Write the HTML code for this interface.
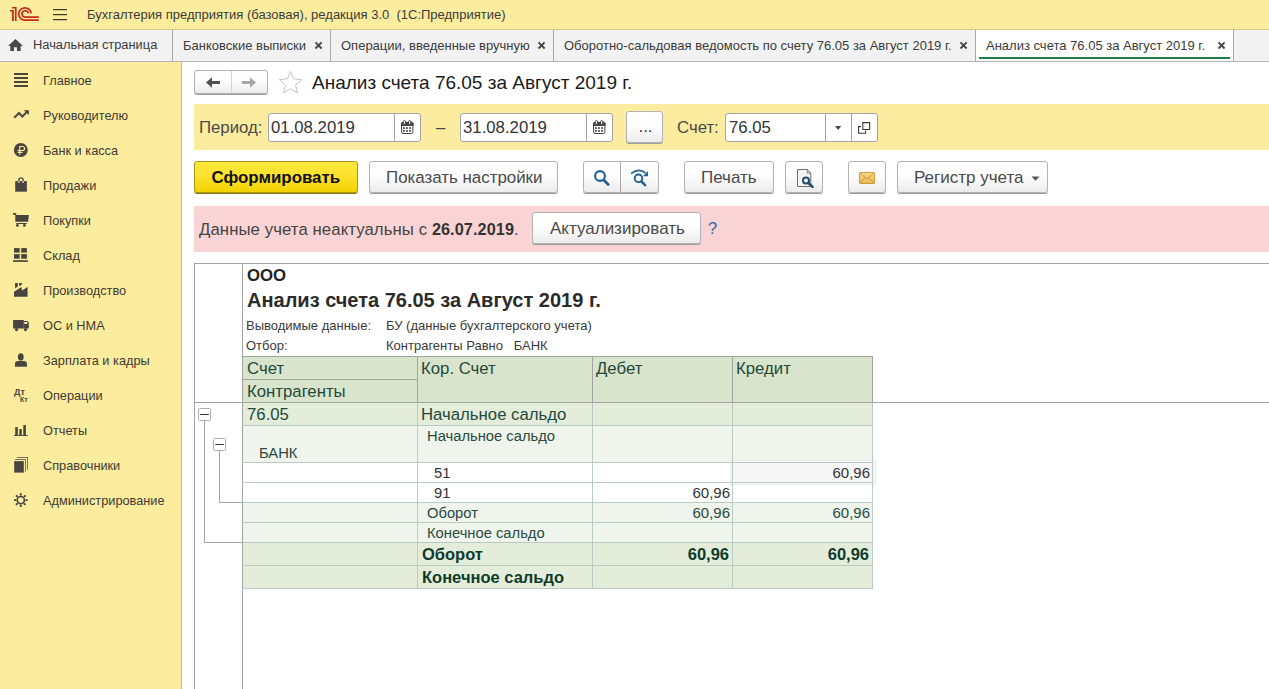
<!DOCTYPE html>
<html><head><meta charset="utf-8">
<style>
*{margin:0;padding:0;box-sizing:border-box}
html,body{width:1269px;height:689px;overflow:hidden;background:#fff;font-family:"Liberation Sans",sans-serif;color:#333}
.a{position:absolute}
.t{position:absolute;white-space:nowrap;line-height:1}
#top{left:0;top:0;width:1269px;height:30px;background:#fbec9e;border-bottom:1px solid #d9cb86}
#tabs{left:0;top:30px;width:1269px;height:32px;background:#f2f2f2;border-bottom:1px solid #b5b5b5}
.sep{position:absolute;top:30px;width:1px;height:31px;background:#a8a8a8}
.tb{font-size:13px;color:#3b3b3b;top:39px}
#side{left:0;top:62px;width:182px;height:627px;background:#fbec9e;border-right:1px solid #c9bb80}
.si{left:43px;font-size:12.75px;color:#3f3b33}
.btn{background:linear-gradient(#fff 0%,#fdfdfd 45%,#ececec 100%);border:1px solid #b2b2b2;border-radius:3px;box-shadow:0 1px 0 #9c9c9c}
.ybtn{background:linear-gradient(#ffe93c 0%,#fde12a 50%,#f3d200 100%);border:1px solid #a89417;border-radius:3px;box-shadow:0 1px 0 #8d7b10}
.inp{background:#fff;border:1px solid #a3a3a3;border-radius:3px}
.lbl{font-size:16.75px;color:#4a4a4a}
.val{font-size:16.75px;color:#333}
.bt{font-size:17px;color:#4a4a4a}
.rs{font-size:13px;color:#3a3a3a}
.rh{font-size:16.75px;color:#1f4a3c}
.rm{font-size:14.75px;color:#2a4a40}
.rn{font-size:14.75px;color:#333}
.rb{font-size:16.5px;font-weight:bold;color:#0f3b2d}
.hl{position:absolute;left:242px;width:631px;height:1px;background:#b9ccc4}
.vl{position:absolute;top:402px;width:1px;height:187px;background:#b9ccc4}
.rn2{font-size:15px;color:#333}
.rm2{font-size:15px;color:#2a4a40}
</style></head><body>
<!-- top bar -->
<div id="top" class="a"></div>
<svg class="a" style="left:0;top:0" width="80" height="29" viewBox="0 0 80 29">
 <g fill="#c82a1a">
  <path d="M10 10h3.8v10.9h-1.8v-9.4h-2z"/>
  <path d="M12 7h4.6v13.9h-1.7v-12.4h-2.9z"/>
 </g>
 <g fill="none" stroke="#c82a1a" stroke-width="1.7">
  <path d="M31.1 13.4A6.2 6.2 0 1 0 25.2 20.2H38.9"/>
  <path d="M28.3 13.4A3.15 3.15 0 1 0 25.2 17.05H38.9"/>
 </g>
 <g fill="#3d3828">
  <rect x="53" y="9" width="14" height="1.2"/>
  <rect x="53" y="14" width="14" height="1.2"/>
  <rect x="53" y="19" width="14" height="1.2"/>
 </g>
</svg>
<div class="t" style="left:87px;top:8px;font-size:13px;color:#3c3c3c">Бухгалтерия предприятия (базовая), редакция 3.0&nbsp; (1С:Предприятие)</div>

<!-- tabs -->
<div id="tabs" class="a"></div>
<div class="a" style="left:976px;top:30px;width:257px;height:31px;background:#fff"></div>
<div class="a" style="left:979px;top:57px;width:251px;height:2px;background:#1f7d47"></div>
<div class="sep" style="left:172px"></div>
<div class="sep" style="left:330px"></div>
<div class="sep" style="left:553px"></div>
<div class="sep" style="left:975px"></div>
<div class="sep" style="left:1233px"></div>
<svg class="a" style="left:0;top:30px" width="1269" height="31" viewBox="0 30 1269 31">
 <path fill="#4a4a4a" d="M15.5 39L8 46H10.3V51H14V47.3H17V51H20.7V46H23z"/>
 <g stroke="#454545" stroke-width="1.9" fill="none">
  <path d="M315.5 42.4l6.1 6.1M321.6 42.4l-6.1 6.1"/>
  <path d="M538.5 42.4l6.1 6.1M544.6 42.4l-6.1 6.1"/>
  <path d="M960.5 42.4l6.1 6.1M966.6 42.4l-6.1 6.1"/>
  <path d="M1218.5 42.4l6.1 6.1M1224.6 42.4l-6.1 6.1"/>
 </g>
</svg>
<div class="t tb" style="left:33px;font-size:12.85px">Начальная страница</div>
<div class="t tb" style="left:183px">Банковские выписки</div>
<div class="t tb" style="left:341px">Операции, введенные вручную</div>
<div class="t tb" style="left:564px">Оборотно-сальдовая ведомость по счету 76.05 за Август 2019 г.</div>
<div class="t tb" style="left:986px">Анализ счета 76.05 за Август 2019 г.</div>

<!-- sidebar -->
<div id="side" class="a"></div>
<svg class="a" style="left:0;top:62px" width="40" height="460" viewBox="0 62 40 460">
 <g fill="#484540">
  <!-- main -->
  <rect x="14" y="73" width="14" height="2"/><rect x="14" y="77" width="14" height="2"/>
  <rect x="14" y="81" width="14" height="2"/><rect x="14" y="85" width="14" height="2"/>
  <!-- chart arrow -->
  <path d="M23.8 110.2H28.9V115.1z"/>
  <!-- ruble -->
  <circle cx="20.8" cy="150" r="6.9"/>
  <!-- bag -->
  <path d="M15.2 181.1H26.9V191.7H15.2z"/>
  <!-- cart -->
  <path d="M13 213.1H16.2V215H28.9L28.1 221.7H15.3V214.7H13z"/>
  <rect x="16.3" y="223" width="10.5" height="1"/>
  <circle cx="17.4" cy="225.4" r="1.4"/><circle cx="24.4" cy="225.4" r="1.4"/>
  <!-- warehouse -->
  <rect x="14" y="248.1" width="5.7" height="4.5"/><rect x="21.2" y="248.1" width="5.7" height="4.5"/>
  <rect x="14" y="254.1" width="5.7" height="4.6"/><rect x="21.2" y="254.1" width="5.7" height="4.6"/>
  <rect x="13.1" y="260.2" width="14.7" height="1.7"/>
  <!-- factory -->
  <path d="M14 296.7V291.8L21.4 287.1L22 290.5L27.6 287.1V296.7z"/>
  <path d="M15 282.9H17.8V286.5L15.2 288.6z"/>
  <path d="M19.1 282.9H21.8V284.7L19.1 286.3z"/>
  <!-- truck -->
  <path d="M13.1 320H23.8V328.5H13.1z"/>
  <path d="M23.8 320.9H27.4L28.8 322.8V328.5H23.8z"/>
  <circle cx="16.5" cy="329.6" r="1.6"/><circle cx="25.5" cy="329.6" r="1.6"/>
  <!-- person -->
  <ellipse cx="20.8" cy="356.9" rx="2.9" ry="3.7"/>
  <path d="M15 366.7V363.5Q15 361 18 361H23.6Q26.9 361 26.9 363.5V366.7z"/>
  <!-- reports -->
  <rect x="15.2" y="427.1" width="2.6" height="8.2"/>
  <rect x="19.3" y="429.1" width="2.5" height="6.2"/>
  <rect x="23.3" y="425" width="2.6" height="10.3"/>
  <rect x="14" y="435" width="13.8" height="0.9"/>
  <!-- books -->
  <rect x="14.2" y="461.1" width="9.6" height="11.5"/>
  <path d="M15.2 459H25.7V471.7H25V459.8H15.2z"/>
  <path d="M17.1 457H27.8V469.8H27.1V457.7H17.1z"/>
 </g>
 <g fill="none" stroke="#484540">
  <path stroke-width="2" d="M14.2 117.8L19.1 113L22.3 116.6L26.5 112.2"/>
  <path stroke-width="1.4" d="M18.9 181.5V180Q18.9 177.9 21 177.9Q23.1 177.9 23.1 180V181.5"/>
  <circle cx="20.8" cy="500.1" r="3.6" stroke-width="1.6"/>
  <path stroke-width="1.8" d="M20.8 493.3V495.5M20.8 504.7V506.9M14 500.1H16.2M25.4 500.1H27.6M16 495.3L17.5 496.8M24.1 503.4L25.6 504.9M25.6 495.3L24.1 496.8M17.5 503.4L16 504.9"/>
 </g>
 <g fill="none" stroke="#fbec9e" stroke-width="1.1">
  <path d="M19.7 154.8V146.5H22.6Q24.6 146.5 24.6 148.5Q24.6 150.5 22.6 150.5H17.6M17.6 152.4H22.5"/>
 </g>
 <rect x="24.2" y="322" width="3" height="2" fill="#f5eab8"/>
 <ellipse cx="18.9" cy="182.1" rx="0.75" ry="1" fill="#f7ecc0"/><ellipse cx="23.1" cy="182.1" rx="0.75" ry="1" fill="#f7ecc0"/>
 <text x="14" y="394.6" font-family="Liberation Sans" font-weight="bold" font-size="9" fill="#484540">Дт</text>
 <text x="20" y="401.7" font-family="Liberation Sans" font-weight="bold" font-size="7" fill="#484540">Кт</text>
</svg>
<div class="t si" style="top:74.5px">Главное</div>
<div class="t si" style="top:109.5px">Руководителю</div>
<div class="t si" style="top:144.5px">Банк и касса</div>
<div class="t si" style="top:179.5px">Продажи</div>
<div class="t si" style="top:214.5px">Покупки</div>
<div class="t si" style="top:249.5px">Склад</div>
<div class="t si" style="top:284.5px">Производство</div>
<div class="t si" style="top:319.5px">ОС и НМА</div>
<div class="t si" style="top:354.5px">Зарплата и кадры</div>
<div class="t si" style="top:389.5px">Операции</div>
<div class="t si" style="top:424.5px">Отчеты</div>
<div class="t si" style="top:459.5px">Справочники</div>
<div class="t si" style="top:494.5px">Администрирование</div>


<!-- form header -->
<div class="btn a" style="left:194px;top:70px;width:74px;height:24px"></div>
<div class="a" style="left:231px;top:71px;width:1px;height:22px;background:#d4d4d4"></div>
<svg class="a" style="left:194px;top:70px" width="120" height="26" viewBox="194 70 120 26">
 <path fill="#505050" d="M206 82.5L212 77.2V81H220V84H212V87.8z"/>
 <path fill="#a6a6a6" d="M256 82.5L250 77.2V81H242V84H250V87.8z"/>
 <path fill="none" stroke="#c4c4c4" stroke-width="1" d="M290.5 71.4L293.7 78.9L301.8 79.6L295.6 85.0L297.5 92.9L290.5 88.7L283.5 92.9L285.4 85.0L279.2 79.6L287.3 78.9z"/>
</svg>
<div class="t" style="left:312px;top:72.7px;font-size:19px;color:#1a1a1a">Анализ счета 76.05 за Август 2019 г.</div>

<!-- period panel -->
<div class="a" style="left:194px;top:104px;width:1075px;height:46px;background:#fbeca0"></div>
<div class="t lbl" style="left:199px;top:119.8px">Период:</div>
<div class="inp a" style="left:268px;top:113px;width:153px;height:29px"></div>
<div class="a" style="left:394px;top:114px;width:1px;height:27px;background:#a3a3a3"></div>
<div class="t val" style="left:271px;top:119.6px">01.08.2019</div>
<div class="t lbl" style="left:436px;top:119.8px">–</div>
<div class="inp a" style="left:460px;top:113px;width:153px;height:29px"></div>
<div class="a" style="left:586px;top:114px;width:1px;height:27px;background:#a3a3a3"></div>
<div class="t val" style="left:463px;top:119.6px">31.08.2019</div>
<div class="btn a" style="left:626px;top:111px;width:37px;height:32px"></div>
<div class="t" style="left:638.5px;top:119px;font-size:16.75px;color:#333">...</div>
<div class="t lbl" style="left:677px;top:119.8px">Счет:</div>
<div class="inp a" style="left:725px;top:113px;width:153px;height:29px"></div>
<div class="a" style="left:825px;top:114px;width:1px;height:27px;background:#a3a3a3"></div>
<div class="a" style="left:851px;top:114px;width:1px;height:27px;background:#a3a3a3"></div>
<div class="t val" style="left:729px;top:119.6px">76.05</div>
<svg class="a" style="left:390px;top:110px" width="500" height="36" viewBox="390 110 500 36">
 <g id="cal">
  <rect x="401.6" y="122.4" width="11.3" height="11.1" rx="1.4" fill="#fff" stroke="#454545" stroke-width="1"/>
  <path d="M401.1 123.6Q401.1 121.9 402.8 121.9H411.8Q413.5 121.9 413.5 123.6V125.9H401.1z" fill="#454545"/>
  <rect x="403.3" y="120.6" width="2.3" height="3.8" rx="1.15" fill="#fff" stroke="#454545" stroke-width="1"/>
  <rect x="408.5" y="120.6" width="2.3" height="3.8" rx="1.15" fill="#fff" stroke="#454545" stroke-width="1"/>
  <g fill="#3a3a3a">
   <rect x="403" y="127.2" width="1.7" height="1.7"/><rect x="406" y="127.2" width="1.7" height="1.7"/><rect x="409.2" y="127.2" width="1.7" height="1.7"/>
   <rect x="403" y="130.1" width="1.7" height="1.7"/><rect x="406" y="130.1" width="1.7" height="1.7"/><rect x="409.2" y="130.1" width="1.7" height="1.7"/>
  </g>
 </g>
 <use href="#cal" x="192" y="0"/>
 <path fill="#444" d="M835 126H841.2L838.1 130z"/>
 <path fill="none" stroke="#3a3a3a" stroke-width="1.1" d="M862.8 129.5V122.6H869.6V129.5z M861 126.6H858.6V133.2H865.6V130.6"/>
</svg>

<!-- command bar -->
<div class="ybtn a" style="left:194px;top:161px;width:164px;height:32px"></div>
<div class="t" style="left:211.5px;top:170px;font-size:16.9px;font-weight:bold;color:#111">Сформировать</div>
<div class="btn a" style="left:369px;top:161px;width:189px;height:32px"></div>
<div class="t bt" style="left:386px;top:169.6px;font-size:16.9px">Показать настройки</div>
<div class="btn a" style="left:583px;top:161px;width:76px;height:32px"></div>
<div class="a" style="left:620px;top:162px;width:1px;height:31px;background:#a8a8a8"></div>
<div class="btn a" style="left:684px;top:161px;width:90px;height:32px"></div>
<div class="t bt" style="left:701px;top:168.7px">Печать</div>
<div class="btn a" style="left:785px;top:161px;width:38px;height:32px"></div>
<div class="btn a" style="left:848px;top:161px;width:38px;height:32px"></div>
<div class="btn a" style="left:897px;top:161px;width:151px;height:32px"></div>
<div class="t bt" style="left:914px;top:168.7px">Регистр учета</div>
<svg class="a" style="left:580px;top:160px" width="480" height="36" viewBox="580 160 480 36">
 <g fill="none" stroke="#21609a">
  <circle cx="600" cy="176" r="4.9" stroke-width="2.1"/>
  <path d="M603.8 180l4.4 4.4" stroke-width="2.8" stroke-linecap="round"/>
  <circle cx="638.5" cy="178.3" r="3.8" stroke-width="1.9"/>
  <path d="M641.4 181.3l3.7 3.8" stroke-width="2.5" stroke-linecap="round"/>
  <path d="M631 173.6Q639 167.5 645.5 173" stroke-width="1.7"/>
 </g>
 <path fill="#21609a" d="M648 171V176.2H643z"/>
 <path fill="#f4f4f4" stroke="#6e6e6e" stroke-width="1" d="M797.5 169.5H807.3L810.8 173V186.5H797.5z"/>
 <path fill="none" stroke="#6e6e6e" stroke-width="0.9" d="M807.3 169.5V173H810.8"/>
 <g fill="none" stroke="#1f4f78">
  <circle cx="806" cy="180.4" r="3" stroke-width="2"/>
  <path d="M808.4 183l4.2 3.9" stroke-width="2.5" stroke-linecap="round"/>
 </g>
 <defs><linearGradient id="env" x1="0" y1="0" x2="0" y2="1"><stop offset="0" stop-color="#f7d98a"/><stop offset="1" stop-color="#e9b752"/></linearGradient></defs>
 <rect x="859.5" y="172.5" width="15" height="11" rx="0.8" fill="url(#env)" stroke="#c99a3e" stroke-width="1"/>
 <path fill="none" stroke="#c39540" stroke-width="0.9" d="M860 173.2L867 178.8L874 173.2M860 183L865 178M874 183L869 178"/>
 <path fill="#555" d="M1031.5 176.5H1039.5L1035.5 180.8z"/>
</svg>

<!-- pink message -->
<div class="a" style="left:194px;top:206px;width:1075px;height:46px;background:#fad4d4"></div>
<div class="t" style="left:199px;top:220.5px;font-size:16.75px;color:#454545;letter-spacing:0.08px">Данные учета неактуальны с <b style="color:#333;font-size:16.25px">26.07.2019</b>.</div>
<div class="btn a" style="left:532px;top:212px;width:169px;height:32px"></div>
<div class="t bt" style="left:550px;top:219.9px">Актуализировать</div>
<div class="t" style="left:708px;top:220px;font-size:16.5px;color:#2d6ba3">?</div>


<!-- report -->
<div class="a" style="left:194px;top:263px;width:1075px;height:1px;background:#a3a3a3"></div>
<div class="a" style="left:194px;top:263px;width:1px;height:426px;background:#a3a3a3"></div>
<div class="a" style="left:242px;top:263px;width:1px;height:426px;background:#a3a3a3"></div>
<div class="a" style="left:194px;top:402px;width:48px;height:1px;background:#a3a3a3"></div>
<div class="a" style="left:873px;top:402px;width:396px;height:1px;background:#a3a3a3"></div>
<div class="t" style="left:247px;top:268.4px;font-size:16.75px;font-weight:bold;color:#222">ООО</div>
<div class="t" style="left:247px;top:290.3px;font-size:20px;font-weight:bold;color:#2b2b2b">Анализ счета 76.05 за Август 2019 г.</div>
<div class="t rs" style="left:246px;top:319px">Выводимые данные:</div>
<div class="t rs" style="left:386px;top:319px">БУ (данные бухгалтерского учета)</div>
<div class="t rs" style="left:246px;top:339px">Отбор:</div>
<div class="t rs" style="left:386px;top:339px">Контрагенты Равно&nbsp;&nbsp; БАНК</div>
<!-- header bg -->
<div class="a" style="left:243px;top:357px;width:630px;height:45px;background:#d9e4cc"></div>
<!-- data row bgs -->
<div class="a" style="left:243px;top:403px;width:630px;height:22px;background:#e4edda"></div>
<div class="a" style="left:243px;top:426px;width:630px;height:36px;background:#eff4ec"></div>
<div class="a" style="left:243px;top:463px;width:630px;height:39px;background:#fff"></div>
<div class="a" style="left:243px;top:503px;width:630px;height:39px;background:#eff4ec"></div>
<div class="a" style="left:243px;top:543px;width:630px;height:45px;background:#e4edda"></div>
<!-- active cell -->
<div class="a" style="left:730px;top:460px;width:146px;height:25px;background:#f6f6f6;border:1px solid #ececec"></div>
<!-- data grid lines -->
<div class="hl" style="top:425px"></div>
<div class="hl" style="top:462px"></div>
<div class="hl" style="top:482px"></div>
<div class="hl" style="top:502px"></div>
<div class="hl" style="top:522px"></div>
<div class="hl" style="top:542px"></div>
<div class="hl" style="top:565px"></div>
<div class="hl" style="top:588px"></div>
<div class="vl" style="left:417px"></div>
<div class="vl" style="left:592px"></div>
<div class="vl" style="left:732px"></div>
<div class="vl" style="left:872px"></div>
<!-- header lines -->
<div class="a" style="left:242px;top:356px;width:631px;height:1px;background:#a3a3a3"></div>
<div class="a" style="left:242px;top:379px;width:175px;height:1px;background:#a3a3a3"></div>
<div class="a" style="left:242px;top:402px;width:631px;height:1px;background:#a3a3a3"></div>
<div class="a" style="left:417px;top:356px;width:1px;height:46px;background:#a3a3a3"></div>
<div class="a" style="left:592px;top:356px;width:1px;height:46px;background:#a3a3a3"></div>
<div class="a" style="left:732px;top:356px;width:1px;height:46px;background:#a3a3a3"></div>
<div class="a" style="left:872px;top:356px;width:1px;height:46px;background:#a3a3a3"></div>
<!-- header text -->
<div class="t rh" style="left:247px;top:360.5px">Счет</div>
<div class="t rh" style="left:247px;top:384.4px">Контрагенты</div>
<div class="t rh" style="left:421px;top:360.5px">Кор. Счет</div>
<div class="t rh" style="left:596px;top:360.5px">Дебет</div>
<div class="t rh" style="left:736px;top:360.5px">Кредит</div>
<!-- data text -->
<div class="t rh" style="left:247px;top:407px">76.05</div>
<div class="t rh" style="left:421px;top:407px">Начальное сальдо</div>
<div class="t rm" style="left:259px;top:445.5px">БАНК</div>
<div class="t rm" style="left:427px;top:429.1px">Начальное сальдо</div>
<div class="t rn" style="left:434px;top:465.5px">51</div>
<div class="t rn" style="left:434px;top:485.5px">91</div>
<div class="t rm" style="left:427px;top:506px">Оборот</div>
<div class="t rm" style="left:427px;top:525.5px">Конечное сальдо</div>
<div class="t rb" style="left:422px;top:546px">Оборот</div>
<div class="t rb" style="left:422px;top:569px">Конечное сальдо</div>
<div class="t rn2 r" style="right:399px;top:465px">60,96</div>
<div class="t rn2 r" style="right:539px;top:485px">60,96</div>
<div class="t rm2 r" style="right:539px;top:505px">60,96</div>
<div class="t rm2 r" style="right:399px;top:505px">60,96</div>
<div class="t rb r" style="right:540px;top:546px">60,96</div>
<div class="t rb r" style="right:400px;top:546px">60,96</div>
<!-- tree -->
<svg class="a" style="left:194px;top:400px" width="50" height="150" viewBox="194 400 50 150">
 <g fill="none" stroke="#a3a3a3" stroke-width="1">
  <path d="M204.5 420.5V542.5H242"/>
  <path d="M219.5 450.5V502.5H242"/>
  <rect x="198.5" y="408.5" width="12" height="12" rx="1" fill="#fff" stroke="#adadad"/>
  <rect x="213.5" y="438.5" width="12" height="12" rx="1" fill="#fff" stroke="#adadad"/>
 </g>
 <path d="M200.2 414.5H208.8M215.2 444.5H223.8" stroke="#333" stroke-width="1"/>
</svg>

</body></html>
